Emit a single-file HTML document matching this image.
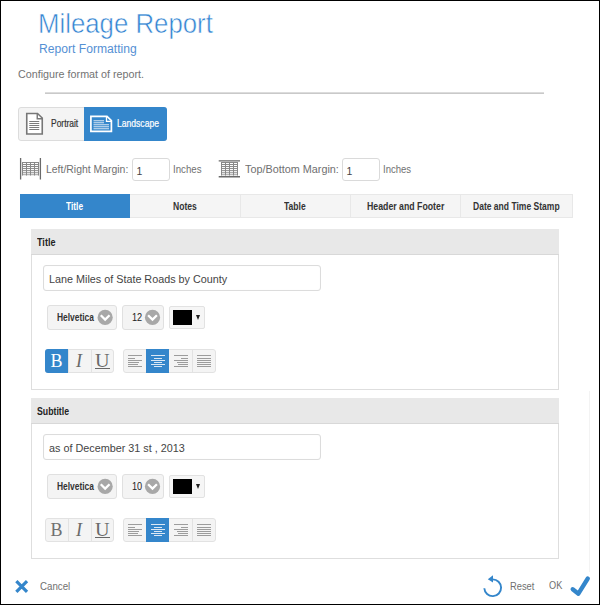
<!DOCTYPE html>
<html><head><meta charset="utf-8">
<style>
*{margin:0;padding:0;box-sizing:border-box}
html,body{width:600px;height:605px;overflow:hidden;background:#fff}
body{font-family:"Liberation Sans",sans-serif;position:relative}
.a{position:absolute;white-space:nowrap}
.t{line-height:1}
</style></head><body>
<div class="a t" style="left:38px;top:10px;font-size:28px;color:#3585d2;transform:scaleX(0.921);transform-origin:0 0;-webkit-text-stroke:0.55px #fff;">Mileage Report</div>
<div class="a t" style="left:38.5px;top:43px;font-size:12px;color:#5590d4;transform:scaleX(1.010);transform-origin:0 0;">Report Formatting</div>
<div class="a t" style="left:17.5px;top:69px;font-size:11px;color:#737373;transform:scaleX(0.977);transform-origin:0 0;">Configure format of report.</div>
<div class="a" style="left:45px;top:92px;width:499px;height:2px;border-top:1px solid #dcdcdc;border-bottom:1px solid #c9c9c9"></div>
<div class="a" style="left:18px;top:107px;width:149px;height:34px;border:1px solid #dcdcdc;border-radius:3px;background:#f4f4f4"></div>
<div class="a" style="left:84px;top:107px;width:83px;height:34px;background:#3486cb;border-radius:0 3px 3px 0"></div>
<svg class="a" style="left:25px;top:112px" width="20" height="24" viewBox="0 0 20 24">
<path d="M1.75 1.5 H12.5 L17.25 6 V22 H1.75 Z" fill="#fff" stroke="#777" stroke-width="1.6" stroke-linejoin="miter"/>
<path d="M12.25 1.5 V6.75 H17.25" fill="none" stroke="#777" stroke-width="1.4"/>
<path d="M4.25 9.5H14.25 M4.25 11.5H14.25 M4.25 13.5H14.25 M4.25 15.5H14.25 M4.25 17.5H14.25" stroke="#7c7c7c" stroke-width="1"/>
</svg>
<div class="a t" style="left:51px;top:119px;font-size:10px;color:#333;transform:scaleX(0.844);transform-origin:0 0;-webkit-text-stroke:0.2px #333;">Portrait</div>
<svg class="a" style="left:89px;top:114px" width="26" height="20" viewBox="0 0 26 20">
<path d="M1.9 2.4 H18 L22.4 6.6 V17.4 H1.9 Z" fill="none" stroke="#fff" stroke-width="1.7"/>
<path d="M17.5 2.4 V7.4 H22.4" fill="none" stroke="#fff" stroke-width="1.3"/>
<path d="M4.5 6.75H15 M4.5 8.75H15 M4.5 10.75H20 M4.5 12.75H20 M4.5 14.75H20" stroke="#d6e5f3" stroke-width="1"/>
</svg>
<div class="a t" style="left:117px;top:119px;font-size:10px;color:#fff;transform:scaleX(0.857);transform-origin:0 0;-webkit-text-stroke:0.2px #fff;">Landscape</div>
<svg class="a" style="left:17px;top:155px" width="28" height="28" viewBox="17 155 28 28"><defs><linearGradient id="gf17" x1="0" y1="0" x2="0" y2="1"><stop offset="0" stop-color="#fff"/><stop offset="0.55" stop-color="#fafafa"/><stop offset="1" stop-color="#d8d8d8"/></linearGradient></defs><rect x="22" y="162" width="17" height="13.5" fill="url(#gf17)"/><path d="M22 162.5H39" stroke="#8a8a8a" stroke-width="1"/><path d="M22 164.5H39" stroke="#8a8a8a" stroke-width="1"/><path d="M22 166.5H39" stroke="#8c8c8c" stroke-width="1"/><path d="M22 168.5H39" stroke="#909090" stroke-width="1"/><path d="M22 170.5H39" stroke="#999" stroke-width="1"/><path d="M22 172.5H39" stroke="#a8a8a8" stroke-width="1"/><path d="M22 174.5H39" stroke="#b4b4b4" stroke-width="1"/><path d="M22.5 162V175.5" stroke="#888" stroke-width="1"/><path d="M26.5 162V175.5" stroke="#888" stroke-width="1"/><path d="M30.5 162V175.5" stroke="#888" stroke-width="1"/><path d="M34.5 162V175.5" stroke="#888" stroke-width="1"/><path d="M38.5 162V175.5" stroke="#888" stroke-width="1"/><path d="M20.6 158V179.5 M40.4 158V179.5" stroke="#6a6a6a" stroke-width="1.3"/></svg>
<div class="a t" style="left:46px;top:164px;font-size:11px;color:#707070;transform:scaleX(0.948);transform-origin:0 0;">Left/Right Margin:</div>
<div class="a" style="left:132px;top:158px;width:38px;height:23px;border:1px solid #dadada;border-radius:3px;background:#fff"></div>
<div class="a t" style="left:136.5px;top:165.5px;font-size:10.5px;color:#444;">1</div>
<div class="a t" style="left:172.7px;top:164px;font-size:11px;color:#707070;transform:scaleX(0.879);transform-origin:0 0;">Inches</div>
<svg class="a" style="left:215px;top:155px" width="28" height="28" viewBox="215 155 28 28"><defs><linearGradient id="gf215" x1="0" y1="0" x2="0" y2="1"><stop offset="0" stop-color="#fff"/><stop offset="0.55" stop-color="#fafafa"/><stop offset="1" stop-color="#d8d8d8"/></linearGradient></defs><rect x="221" y="162" width="17" height="13.5" fill="url(#gf215)"/><path d="M221 162.5H238" stroke="#8a8a8a" stroke-width="1"/><path d="M221 164.5H238" stroke="#8a8a8a" stroke-width="1"/><path d="M221 166.5H238" stroke="#8c8c8c" stroke-width="1"/><path d="M221 168.5H238" stroke="#909090" stroke-width="1"/><path d="M221 170.5H238" stroke="#999" stroke-width="1"/><path d="M221 172.5H238" stroke="#a8a8a8" stroke-width="1"/><path d="M221 174.5H238" stroke="#b4b4b4" stroke-width="1"/><path d="M221.5 162V175.5" stroke="#888" stroke-width="1"/><path d="M225.5 162V175.5" stroke="#888" stroke-width="1"/><path d="M229.5 162V175.5" stroke="#888" stroke-width="1"/><path d="M233.5 162V175.5" stroke="#888" stroke-width="1"/><path d="M237.5 162V175.5" stroke="#888" stroke-width="1"/><path d="M218.7 160.9H240 M218.7 176.7H240" stroke="#6a6a6a" stroke-width="1.4"/></svg>
<div class="a t" style="left:244.5px;top:164px;font-size:11px;color:#707070;transform:scaleX(0.984);transform-origin:0 0;">Top/Bottom Margin:</div>
<div class="a" style="left:342px;top:158px;width:38px;height:23px;border:1px solid #dadada;border-radius:3px;background:#fff"></div>
<div class="a t" style="left:346.5px;top:165.5px;font-size:10.5px;color:#444;">1</div>
<div class="a t" style="left:383px;top:164px;font-size:11px;color:#707070;transform:scaleX(0.867);transform-origin:0 0;">Inches</div>
<div class="a" style="left:20px;top:194px;width:553px;height:24px;background:#f5f5f5;border:1px solid #e8e8e8"></div>
<div class="a" style="left:20px;top:194px;width:110px;height:24px;background:#3486cb"></div>
<div class="a" style="left:240px;top:194px;width:1px;height:24px;background:#e8e8e8"></div>
<div class="a" style="left:350px;top:194px;width:1px;height:24px;background:#e8e8e8"></div>
<div class="a" style="left:460px;top:194px;width:1px;height:24px;background:#e8e8e8"></div>
<div class="a t" style="left:66.0px;top:202px;font-size:10px;font-weight:bold;color:#fff;transform:scaleX(0.838);transform-origin:0 0;">Title</div>
<div class="a t" style="left:173.0px;top:202px;font-size:10px;font-weight:bold;color:#333;transform:scaleX(0.857);transform-origin:0 0;">Notes</div>
<div class="a t" style="left:284.0px;top:202px;font-size:10px;font-weight:bold;color:#333;transform:scaleX(0.854);transform-origin:0 0;">Table</div>
<div class="a t" style="left:366.5px;top:202px;font-size:10px;font-weight:bold;color:#333;transform:scaleX(0.875);transform-origin:0 0;">Header and Footer</div>
<div class="a t" style="left:473.0px;top:202px;font-size:10px;font-weight:bold;color:#333;transform:scaleX(0.853);transform-origin:0 0;">Date and Time Stamp</div>
<div class="a" style="left:31px;top:229px;width:528px;height:161px;border:1px solid #dedede;border-top:none;background:#fff"></div>
<div class="a" style="left:31px;top:229px;width:528px;height:26px;background:#e8e8e8;border-bottom:1px solid #d8d8d8"></div>
<div class="a t" style="left:36.5px;top:238px;font-size:10px;font-weight:bold;color:#222;transform:scaleX(0.905);transform-origin:0 0;">Title</div>
<div class="a" style="left:43px;top:265px;width:278px;height:26px;border:1px solid #dcdcdc;border-radius:3px;background:#fff;box-shadow:inset 0 0 1px #eee"></div>
<div class="a t" style="left:48.5px;top:273.5px;font-size:11px;color:#444;transform:scaleX(0.981);transform-origin:0 0;">Lane Miles of State Roads by County</div>
<div class="a" style="left:47px;top:305px;width:70px;height:25px;border:1px solid #e0e0e0;border-radius:3px;background:#f4f4f4"></div>
<div class="a t" style="left:57px;top:313px;font-size:10px;font-weight:bold;color:#333;transform:scaleX(0.841);transform-origin:0 0;">Helvetica</div>
<div class="a" style="left:122px;top:305px;width:42px;height:25px;border:1px solid #e0e0e0;border-radius:3px;background:#f4f4f4"></div>
<div class="a t" style="left:131.5px;top:312px;font-size:11px;color:#222;transform:scaleX(0.833);transform-origin:0 0;">12</div>
<svg class="a" style="left:96px;top:308px" width="19" height="19" viewBox="0 0 19 19"><circle cx="9.150000000000006" cy="9.4" r="7.6" fill="#a8a8a8"/><path d="M4.750000000000005 7.3L9.150000000000006 11.6L13.550000000000006 7.3" fill="none" stroke="#fff" stroke-width="2.3"/></svg>
<svg class="a" style="left:143px;top:308px" width="19" height="19" viewBox="0 0 19 19"><circle cx="9.5" cy="9.4" r="7.6" fill="#a8a8a8"/><path d="M5.1 7.3L9.5 11.6L13.9 7.3" fill="none" stroke="#fff" stroke-width="2.3"/></svg>
<div class="a" style="left:169px;top:306px;width:36px;height:23px;border:1px solid #e2e2e2;border-radius:2px;background:#f6f6f6"></div>
<div class="a" style="left:173px;top:310px;width:19px;height:15px;background:#000"></div>
<div class="a" style="left:195.5px;top:315px;width:0;height:0;border-left:2.75px solid transparent;border-right:2.75px solid transparent;border-top:5px solid #222"></div>
<div class="a" style="left:45px;top:349px;width:69px;height:24px;border:1px solid #e2e2e2;border-radius:3px;background:#f4f4f4"></div>
<div class="a" style="left:45px;top:349px;width:23px;height:24px;background:#3486cb;border-radius:3px 0 0 3px"></div>
<div class="a" style="left:68px;top:349px;width:1px;height:24px;background:#e2e2e2"></div>
<div class="a" style="left:91px;top:349px;width:1px;height:24px;background:#e2e2e2"></div>
<div class="a t" style="left:50.5px;top:352px;font-size:18px;font-family:'Liberation Serif',serif;color:#fff">B</div>
<div class="a t" style="left:76px;top:352px;font-size:18px;font-family:'Liberation Serif',serif;font-style:italic;color:#6a6a6a">I</div>
<div class="a t" style="left:94.5px;top:352px;font-size:18px;font-family:'Liberation Serif',serif;color:#6a6a6a;transform:scaleX(1.12);transform-origin:0 0">U</div>
<div class="a" style="left:94.5px;top:368px;width:15.5px;height:1.2px;background:#666"></div>
<div class="a" style="left:123px;top:349px;width:93px;height:24px;border:1px solid #e2e2e2;border-radius:3px;background:#f4f4f4"></div>
<div class="a" style="left:146px;top:349px;width:23px;height:24px;background:#3486cb"></div>
<div class="a" style="left:192px;top:349px;width:1px;height:24px;background:#e2e2e2"></div>
<div class="a" style="left:127.5px;top:355.3px;width:14.5px;height:1px;background:#9c9c9c"></div>
<div class="a" style="left:127.5px;top:357.5px;width:7.5px;height:1px;background:#9c9c9c"></div>
<div class="a" style="left:127.5px;top:359.7px;width:14.5px;height:1px;background:#9c9c9c"></div>
<div class="a" style="left:127.5px;top:361.90000000000003px;width:11.5px;height:1px;background:#9c9c9c"></div>
<div class="a" style="left:127.5px;top:364.1px;width:10px;height:1px;background:#9c9c9c"></div>
<div class="a" style="left:127.5px;top:366.3px;width:14.5px;height:1px;background:#9c9c9c"></div>
<div class="a" style="left:150.5px;top:355.3px;width:14.5px;height:1px;background:#dbe8f5"></div>
<div class="a" style="left:153.5px;top:357.5px;width:8.5px;height:1px;background:#dbe8f5"></div>
<div class="a" style="left:150.5px;top:359.7px;width:14.5px;height:1px;background:#dbe8f5"></div>
<div class="a" style="left:153.5px;top:361.90000000000003px;width:8.5px;height:1px;background:#dbe8f5"></div>
<div class="a" style="left:150.5px;top:364.1px;width:14.5px;height:1px;background:#dbe8f5"></div>
<div class="a" style="left:153.5px;top:366.3px;width:8.5px;height:1px;background:#dbe8f5"></div>
<div class="a" style="left:173.5px;top:355.3px;width:14.5px;height:1px;background:#9c9c9c"></div>
<div class="a" style="left:180.5px;top:357.5px;width:7.5px;height:1px;background:#9c9c9c"></div>
<div class="a" style="left:173.5px;top:359.7px;width:14.5px;height:1px;background:#9c9c9c"></div>
<div class="a" style="left:176.5px;top:361.90000000000003px;width:11.5px;height:1px;background:#9c9c9c"></div>
<div class="a" style="left:178.0px;top:364.1px;width:10.0px;height:1px;background:#9c9c9c"></div>
<div class="a" style="left:173.5px;top:366.3px;width:14.5px;height:1px;background:#9c9c9c"></div>
<div class="a" style="left:196.5px;top:355.3px;width:14.5px;height:1px;background:#9c9c9c"></div>
<div class="a" style="left:196.5px;top:357.5px;width:14.5px;height:1px;background:#9c9c9c"></div>
<div class="a" style="left:196.5px;top:359.7px;width:14.5px;height:1px;background:#9c9c9c"></div>
<div class="a" style="left:196.5px;top:361.90000000000003px;width:14.5px;height:1px;background:#9c9c9c"></div>
<div class="a" style="left:196.5px;top:364.1px;width:14.5px;height:1px;background:#9c9c9c"></div>
<div class="a" style="left:196.5px;top:366.3px;width:14.5px;height:1px;background:#9c9c9c"></div>
<div class="a" style="left:31px;top:398px;width:528px;height:161px;border:1px solid #dedede;border-top:none;background:#fff"></div>
<div class="a" style="left:31px;top:398px;width:528px;height:26px;background:#e8e8e8;border-bottom:1px solid #d8d8d8"></div>
<div class="a t" style="left:36.5px;top:407px;font-size:10px;font-weight:bold;color:#222;transform:scaleX(0.873);transform-origin:0 0;">Subtitle</div>
<div class="a" style="left:43px;top:434px;width:278px;height:26px;border:1px solid #dcdcdc;border-radius:3px;background:#fff;box-shadow:inset 0 0 1px #eee"></div>
<div class="a t" style="left:48.5px;top:442.5px;font-size:11px;color:#444;transform:scaleX(0.982);transform-origin:0 0;">as of December 31 st , 2013</div>
<div class="a" style="left:47px;top:474px;width:70px;height:25px;border:1px solid #e0e0e0;border-radius:3px;background:#f4f4f4"></div>
<div class="a t" style="left:57px;top:482px;font-size:10px;font-weight:bold;color:#333;transform:scaleX(0.841);transform-origin:0 0;">Helvetica</div>
<div class="a" style="left:122px;top:474px;width:42px;height:25px;border:1px solid #e0e0e0;border-radius:3px;background:#f4f4f4"></div>
<div class="a t" style="left:131.5px;top:481px;font-size:11px;color:#222;transform:scaleX(0.833);transform-origin:0 0;">10</div>
<svg class="a" style="left:96px;top:477px" width="19" height="19" viewBox="0 0 19 19"><circle cx="9.150000000000006" cy="9.4" r="7.6" fill="#a8a8a8"/><path d="M4.750000000000005 7.3L9.150000000000006 11.6L13.550000000000006 7.3" fill="none" stroke="#fff" stroke-width="2.3"/></svg>
<svg class="a" style="left:143px;top:477px" width="19" height="19" viewBox="0 0 19 19"><circle cx="9.5" cy="9.4" r="7.6" fill="#a8a8a8"/><path d="M5.1 7.3L9.5 11.6L13.9 7.3" fill="none" stroke="#fff" stroke-width="2.3"/></svg>
<div class="a" style="left:169px;top:475px;width:36px;height:23px;border:1px solid #e2e2e2;border-radius:2px;background:#f6f6f6"></div>
<div class="a" style="left:173px;top:479px;width:19px;height:15px;background:#000"></div>
<div class="a" style="left:195.5px;top:484px;width:0;height:0;border-left:2.75px solid transparent;border-right:2.75px solid transparent;border-top:5px solid #222"></div>
<div class="a" style="left:45px;top:518px;width:69px;height:24px;border:1px solid #e2e2e2;border-radius:3px;background:#f4f4f4"></div>
<div class="a" style="left:68px;top:518px;width:1px;height:24px;background:#e2e2e2"></div>
<div class="a" style="left:91px;top:518px;width:1px;height:24px;background:#e2e2e2"></div>
<div class="a t" style="left:50.5px;top:521px;font-size:18px;font-family:'Liberation Serif',serif;color:#707070">B</div>
<div class="a t" style="left:76px;top:521px;font-size:18px;font-family:'Liberation Serif',serif;font-style:italic;color:#6a6a6a">I</div>
<div class="a t" style="left:94.5px;top:521px;font-size:18px;font-family:'Liberation Serif',serif;color:#6a6a6a;transform:scaleX(1.12);transform-origin:0 0">U</div>
<div class="a" style="left:94.5px;top:537px;width:15.5px;height:1.2px;background:#666"></div>
<div class="a" style="left:123px;top:518px;width:93px;height:24px;border:1px solid #e2e2e2;border-radius:3px;background:#f4f4f4"></div>
<div class="a" style="left:146px;top:518px;width:23px;height:24px;background:#3486cb"></div>
<div class="a" style="left:192px;top:518px;width:1px;height:24px;background:#e2e2e2"></div>
<div class="a" style="left:127.5px;top:524.3px;width:14.5px;height:1px;background:#9c9c9c"></div>
<div class="a" style="left:127.5px;top:526.5px;width:7.5px;height:1px;background:#9c9c9c"></div>
<div class="a" style="left:127.5px;top:528.6999999999999px;width:14.5px;height:1px;background:#9c9c9c"></div>
<div class="a" style="left:127.5px;top:530.9px;width:11.5px;height:1px;background:#9c9c9c"></div>
<div class="a" style="left:127.5px;top:533.0999999999999px;width:10px;height:1px;background:#9c9c9c"></div>
<div class="a" style="left:127.5px;top:535.3px;width:14.5px;height:1px;background:#9c9c9c"></div>
<div class="a" style="left:150.5px;top:524.3px;width:14.5px;height:1px;background:#dbe8f5"></div>
<div class="a" style="left:153.5px;top:526.5px;width:8.5px;height:1px;background:#dbe8f5"></div>
<div class="a" style="left:150.5px;top:528.6999999999999px;width:14.5px;height:1px;background:#dbe8f5"></div>
<div class="a" style="left:153.5px;top:530.9px;width:8.5px;height:1px;background:#dbe8f5"></div>
<div class="a" style="left:150.5px;top:533.0999999999999px;width:14.5px;height:1px;background:#dbe8f5"></div>
<div class="a" style="left:153.5px;top:535.3px;width:8.5px;height:1px;background:#dbe8f5"></div>
<div class="a" style="left:173.5px;top:524.3px;width:14.5px;height:1px;background:#9c9c9c"></div>
<div class="a" style="left:180.5px;top:526.5px;width:7.5px;height:1px;background:#9c9c9c"></div>
<div class="a" style="left:173.5px;top:528.6999999999999px;width:14.5px;height:1px;background:#9c9c9c"></div>
<div class="a" style="left:176.5px;top:530.9px;width:11.5px;height:1px;background:#9c9c9c"></div>
<div class="a" style="left:178.0px;top:533.0999999999999px;width:10.0px;height:1px;background:#9c9c9c"></div>
<div class="a" style="left:173.5px;top:535.3px;width:14.5px;height:1px;background:#9c9c9c"></div>
<div class="a" style="left:196.5px;top:524.3px;width:14.5px;height:1px;background:#9c9c9c"></div>
<div class="a" style="left:196.5px;top:526.5px;width:14.5px;height:1px;background:#9c9c9c"></div>
<div class="a" style="left:196.5px;top:528.6999999999999px;width:14.5px;height:1px;background:#9c9c9c"></div>
<div class="a" style="left:196.5px;top:530.9px;width:14.5px;height:1px;background:#9c9c9c"></div>
<div class="a" style="left:196.5px;top:533.0999999999999px;width:14.5px;height:1px;background:#9c9c9c"></div>
<div class="a" style="left:196.5px;top:535.3px;width:14.5px;height:1px;background:#9c9c9c"></div>
<svg class="a" style="left:14px;top:579px" width="16" height="16" viewBox="0 0 16 16"><path d="M2.35 2.15L13.05 12.85M13.05 2.15L2.35 12.85" stroke="#3486cb" stroke-width="3.2" stroke-linecap="butt"/></svg>
<div class="a t" style="left:40px;top:580.5px;font-size:11px;color:#707070;transform:scaleX(0.882);transform-origin:0 0;">Cancel</div>
<svg class="a" style="left:480px;top:573px" width="26" height="26" viewBox="0 0 26 26"><path d="M12.7 6.35 A 8.4 8.4 0 1 1 4.3 15.3" fill="none" stroke="#3486cb" stroke-width="1.9"/><path d="M7.8 6.2 L13 2.3 L13 9.6 Z" fill="#3486cb"/></svg>
<div class="a t" style="left:510.2px;top:580.5px;font-size:11px;color:#707070;transform:scaleX(0.848);transform-origin:0 0;">Reset</div>
<div class="a t" style="left:548.8px;top:580px;font-size:11px;color:#707070;transform:scaleX(0.835);transform-origin:0 0;">OK</div>
<svg class="a" style="left:568px;top:574px" width="24" height="24" viewBox="0 0 24 24"><path d="M4.7 15.2L10.4 19.7L19.8 4.5" fill="none" stroke="#3486cb" stroke-width="4.3" stroke-linecap="round" stroke-linejoin="round"/></svg>
<div class="a" style="left:589px;top:391px;width:1px;height:181px;background:#f3f3f3"></div>
<div class="a" style="left:0;top:0;width:600px;height:605px;border:1px solid #000"></div>
</body></html>
